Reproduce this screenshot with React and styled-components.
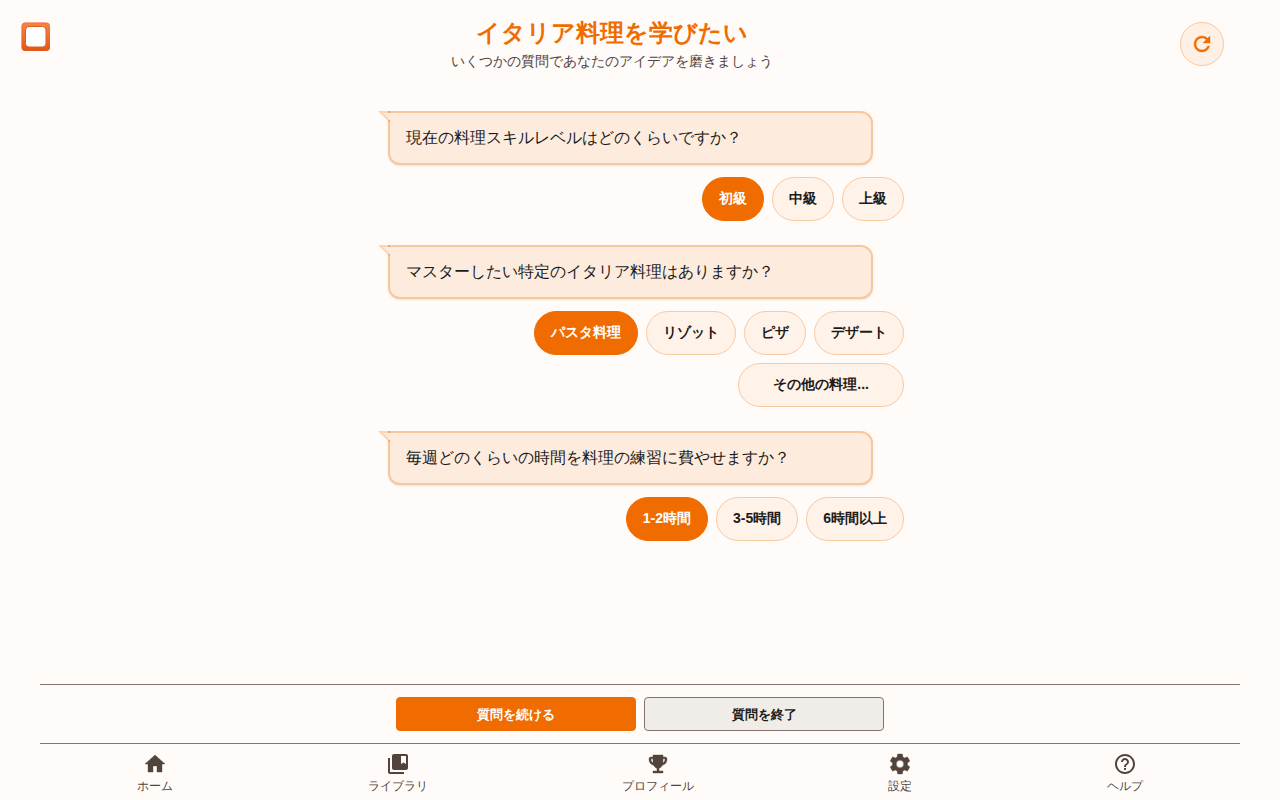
import React, { useState } from "react";
import styled, { createGlobalStyle } from "styled-components";
import { MdCollectionsBookmark, MdHelpOutline } from "react-icons/md";

const Global = createGlobalStyle`
  *, *::before, *::after { box-sizing: border-box; }
  body {
    margin: 0;
    background: #fffbf8;
    color: #1c1b1a;
    font-family: "Liberation Sans", sans-serif;
  }
  button { font-family: inherit; cursor: pointer; }
`;

const Page = styled.div`
  min-height: 100vh;
  display: flex;
  flex-direction: column;
`;

const Header = styled.header`
  display: flex;
  align-items: flex-start;
  padding: 16px 56px 0 20px;
`;

const Logo = styled.a`
  display: block;
  margin-top: 4px;
  width: 32px;
  height: 32px;
  svg { display: block; }
`;

const Titles = styled.div`
  flex: 1;
  text-align: center;
`;

const Title = styled.h1`
  margin: 0;
  font-size: 24px;
  line-height: 34px;
  font-weight: 700;
  color: #f06c00;
`;

const Subtitle = styled.p`
  margin: 0;
  font-size: 14px;
  line-height: 22px;
  color: #52443c;
`;

const RefreshButton = styled.button`
  display: flex;
  align-items: center;
  justify-content: center;
  width: 44px;
  height: 44px;
  margin: 6px 0 0 8px;
  padding: 0;
  border: 1px solid #f9c9a0;
  border-radius: 50%;
  background: #fff0e6;
  color: #f06c00;
`;

const Main = styled.main`
  flex: 1;
  display: flex;
  flex-direction: column;
  gap: 24px;
  width: 100%;
  max-width: 528px;
  margin: 0 auto;
  padding: 39px 0 24px 12px;
`;

const Group = styled.fieldset`
  display: flex;
  flex-direction: column;
  gap: 12px;
  min-width: 0;
  margin: 0;
  padding: 0;
  border: 0;
`;

const Bubble = styled.div`
  position: relative;
  width: 94%;
  padding: 12px 16px;
  border: 2px solid #f9c79e;
  border-radius: 0 12px 12px 12px;
  background: #fdecde;
  box-shadow: 0 1px 2px rgba(0, 0, 0, 0.1);
  font-size: 16px;
  line-height: 26px;
`;

const Tail = styled.svg`
  position: absolute;
  top: -2px;
  left: -12px;
`;

const Options = styled.div`
  display: flex;
  flex-wrap: wrap;
  justify-content: flex-end;
  gap: 8px;
`;

const Chip = styled.button`
  height: 44px;
  padding: 0 ${(p) => (p.$wide ? 34 : 16)}px;
  border: 1px solid ${(p) => (p.$active ? "#f06c00" : "#f9c9a0")};
  border-radius: 22px;
  background: ${(p) => (p.$active ? "#f06c00" : "#fff2e9")};
  color: ${(p) => (p.$active ? "#ffffff" : "#1c1b1a")};
  font-size: 14px;
  font-weight: 700;
`;

const Footer = styled.footer`
  margin: 0 40px;
`;

const Actions = styled.div`
  display: flex;
  justify-content: center;
  gap: 8px;
  padding: 12px 0;
  border-top: 1px solid #85736b;
`;

const Action = styled.button`
  width: 240px;
  height: 34px;
  padding: 1px 0 0;
  border: 1px solid ${(p) => (p.$primary ? "#f06c00" : "#85736b")};
  border-radius: 4px;
  background: ${(p) => (p.$primary ? "#f06c00" : "#f0ede8")};
  color: ${(p) => (p.$primary ? "#ffffff" : "#1c1b1a")};
  font-size: 13px;
  font-weight: 700;
`;

const Nav = styled.nav`
  display: flex;
  justify-content: space-around;
  height: 57px;
  padding-top: 8px;
  border-top: 1px solid #85736b;
`;

const NavLink = styled.a`
  display: flex;
  flex-direction: column;
  align-items: center;
  color: #52443c;
  font-size: 12px;
  line-height: 20px;
  text-decoration: none;
  svg { width: 24px; height: 24px; }
`;

function Glyph({ d }) {
  return (
    <svg
      width="24"
      height="24"
      viewBox="0 0 24 24"
      fill="currentColor"
      fillRule="evenodd"
      stroke="currentColor"
      strokeWidth="0.4"
      aria-hidden="true"
    >
      <path d={d} />
    </svg>
  );
}

const RefreshIcon = () => (
  <Glyph d="M17.65 6.35A7.96 7.96 0 0 0 12 4a8 8 0 1 0 7.730 10h-2.080A6 6 0 1 1 12 6c1.660 0 3.140.69 4.220 1.780L13 11h7V4z" />
);

const HomeIcon = () => <Glyph d="M10 20v-6h4v6h5v-8h3L12 3 2 12h3v8z" />;

const TrophyIcon = () => (
  <Glyph d="M7 3H17V5H19C20.300 5 21 5.700 21 7C21 10.400 19.300 12.700 16.300 13.200C15.500 14.900 14.400 15.900 13 16.200V19H17V21H7V19H11V16.200C9.600 15.900 8.500 14.900 7.700 13.200C4.700 12.700 3 10.400 3 7C3 5.700 3.700 5 5 5H7ZM7 6.800H5C5 8.900 5.700 10.300 7 11ZM17 6.800V11C18.300 10.300 19 8.900 19 6.800Z" />
);

const SettingsIcon = () => (
  <Glyph d="M19.430 12.980c.04-.32.07-.64.07-.98s-.03-.66-.07-.98l2.110-1.650c.19-.15.24-.42.12-.64l-2-3.460c-.12-.22-.39-.3-.61-.22l-2.490 1c-.52-.4-1.080-.73-1.690-.98l-.38-2.650C14.460 2.180 14.250 2 14 2h-4c-.25 0-.46.18-.49.42l-.38 2.650c-.61.25-1.170.59-1.690.98l-2.490-1c-.23-.09-.49 0-.61.22l-2 3.460c-.13.22-.07.49.12.64l2.110 1.650c-.04.32-.07.65-.07.98s.03.66.07.98l-2.110 1.650c-.19.15-.24.42-.12.64l2 3.460c.12.22.39.3.61.22l2.490-1c.52.4 1.080.73 1.690.98l.38 2.650c.03.24.24.42.49.42h4c.25 0 .46-.18.49-.42l.38-2.650c.61-.25 1.170-.59 1.690-.98l2.490 1c.23.09.49 0 .61-.22l2-3.460c.12-.22.07-.49-.12-.64zM12 15.700a3.700 3.700 0 1 1 0-7.400 3.700 3.700 0 0 1 0 7.400z" />
);

function LogoMark() {
  return (
    <svg width="32" height="34" viewBox="0 0 32 34" aria-hidden="true">
      <defs>
        <linearGradient id="logo-frame" x1="0" y1="0" x2="0" y2="1">
          <stop offset="0" stopColor="#fa8244" />
          <stop offset="0.5" stopColor="#f07030" />
          <stop offset="1" stopColor="#df5514" />
        </linearGradient>
      </defs>
      <rect x="1.5" y="2.5" width="28.5" height="28.5" rx="4" fill="url(#logo-frame)" />
      <rect x="2" y="3" width="27.5" height="27.5" rx="3.5" fill="none" stroke="#e2601f" strokeOpacity="0.4" />
      <rect x="5.5" y="6.5" width="20.5" height="20.5" rx="3.5" fill="#ffffff" stroke="#dc5d20" strokeWidth="1" />
    </svg>
  );
}

const QUESTIONS = [
  { text: "現在の料理スキルレベルはどのくらいですか？", options: ["初級", "中級", "上級"] },
  {
    text: "マスターしたい特定のイタリア料理はありますか？",
    options: ["パスタ料理", "リゾット", "ピザ", "デザート", "その他の料理..."],
  },
  { text: "毎週どのくらいの時間を料理の練習に費やせますか？", options: ["1-2時間", "3-5時間", "6時間以上"] },
];

const LINKS = [
  ["ホーム", HomeIcon],
  ["ライブラリ", MdCollectionsBookmark],
  ["プロフィール", TrophyIcon],
  ["設定", SettingsIcon],
  ["ヘルプ", MdHelpOutline],
];

function Question({ text, options }) {
  const [selected, setSelected] = useState(options[0]);
  return (
    <Group aria-label={text}>
      <Bubble>
        <Tail width="12" height="12" viewBox="0 0 12 12" aria-hidden="true">
          <path d="M0 0H12V12Z" fill="#fbd5b5" />
          <path d="M5 2H12V9Z" fill="#fdecde" />
          <path d="M10 0h2v2h-2zM10 9h2v3z" fill="#f4a468" />
        </Tail>
        {text}
      </Bubble>
      <Options>
        {options.map((o) => (
          <Chip
            key={o}
            type="button"
            $active={o === selected}
            $wide={o.endsWith("...")}
            aria-pressed={o === selected}
            onClick={() => setSelected(o)}
          >
            {o}
          </Chip>
        ))}
      </Options>
    </Group>
  );
}

export default function App() {
  return (
    <Page lang="ja">
      <Global />
      <Header>
        <Logo href="#" aria-label="トップ">
          <LogoMark />
        </Logo>
        <Titles>
          <Title>イタリア料理を学びたい</Title>
          <Subtitle>いくつかの質問であなたのアイデアを磨きましょう</Subtitle>
        </Titles>
        <RefreshButton type="button" aria-label="更新">
          <RefreshIcon />
        </RefreshButton>
      </Header>
      <Main>
        {QUESTIONS.map((q) => (
          <Question key={q.text} {...q} />
        ))}
      </Main>
      <Footer>
        <Actions>
          <Action type="button" $primary>質問を続ける</Action>
          <Action type="button">質問を終了</Action>
        </Actions>
        <Nav>
          {LINKS.map(([label, Icon]) => (
            <NavLink key={label} href="#">
              <Icon />
              {label}
            </NavLink>
          ))}
        </Nav>
      </Footer>
    </Page>
  );
}
